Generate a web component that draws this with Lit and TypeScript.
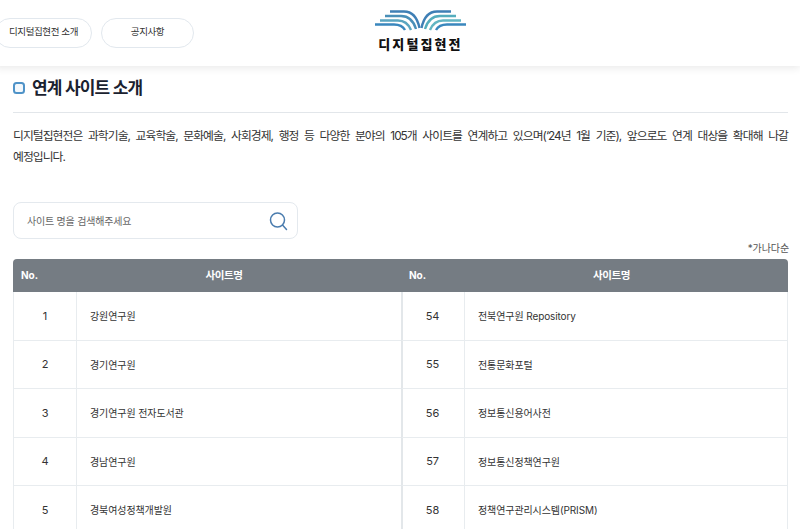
import { LitElement, html, css, svg } from "lit";
import { customElement } from "lit/decorators.js";

const rows: [string, string, string, string][] = [
  ["1", "강원연구원", "54", "전북연구원 Repository"],
  ["2", "경기연구원", "55", "전통문화포털"],
  ["3", "경기연구원 전자도서관", "56", "정보통신용어사전"],
  ["4", "경남연구원", "57", "정보통신정책연구원"],
  ["5", "경북여성정책개발원", "58", "정책연구관리시스템(PRISM)"],
];

@customElement("app-root")
export class AppRoot extends LitElement {
  static styles = css`
    :host {
      display: block;
      width: 800px;
      height: 529px;
      overflow: hidden;
      background: #fff;
      font-family: Inter, "Noto Sans CJK KR", "Noto Sans", sans-serif;
      color: #222;
    }
    header {
      height: 66px;
      position: relative;
      display: flex;
      align-items: flex-start;
      gap: 9px;
      padding: 18px 0 0;
      margin-left: -5px;
      box-sizing: border-box;
      box-shadow: 0 2px 8px rgba(0, 0, 0, 0.09);
    }
    .pill {
      width: 93px;
      height: 30px;
      box-sizing: border-box;
      border: 1px solid #e2e8ee;
      border-radius: 15px;
      display: flex;
      align-items: center;
      justify-content: center;
      font-size: 9.5px;
      letter-spacing: -0.4px;
      color: #333;
      padding-bottom: 4px;
    }
    .pill.first { width: 97px; }
    .logo {
      position: absolute;
      left: 379px;
      top: 10px;
      width: 93px;
      display: flex;
      flex-direction: column;
      align-items: center;
    }
    .logo svg { display: block; }
    .logo-text {
      font-size: 13px;
      font-weight: 900;
      letter-spacing: 2.1px;
      color: #111;
      line-height: 14px;
      margin-top: 6px;
      white-space: nowrap;
    }
    main { padding: 0 12px 0 13px; }
    .title {
      display: flex;
      align-items: center;
      gap: 7px;
      height: 47px;
      padding-bottom: 2px;
      box-sizing: border-box;
      border-bottom: 1px solid #e2e6ea;
      font-size: 17px;
      font-weight: 700;
      letter-spacing: -0.8px;
      color: #1a2230;
      line-height: 1;
    }
    .mark {
      width: 12px;
      height: 12px;
      box-sizing: border-box;
      border: 2.5px solid #4f93c8;
      border-radius: 3.5px;
      background: #f3f8fc;
    }
    .desc {
      margin: 13px 0 0;
      font-size: 11.8px;
      line-height: 21px;
      color: #333;
      letter-spacing: -0.95px;
      word-spacing: 2px;
    }
    .desc span { display: block; }
    .desc .full { text-align: justify; text-align-last: justify; }
    .search {
      margin-top: 34px;
      width: 285px;
      height: 37px;
      box-sizing: border-box;
      border: 1px solid #e4e9ee;
      border-radius: 8px;
      display: flex;
      align-items: center;
      justify-content: space-between;
      padding: 0 9px 0 13px;
      font-size: 10px;
      letter-spacing: -0.2px;
      color: #666;
    }
    .note {
      text-align: right;
      font-size: 10px;
      letter-spacing: -0.1px;
      line-height: 14px;
      margin: 2px -1px 0 0;
      color: #555;
      height: 18px;
    }
    .table {
      display: grid;
      grid-template-columns: 64px 324px 64px 1fr;
      font-size: 10px;
      letter-spacing: -0.1px;
      color: #333;
    }
    .th {
      height: 33px;
      background: #757c83;
      color: #fff;
      font-weight: 700;
      font-size: 10.5px;
      display: flex;
      align-items: center;
      justify-content: center;
      padding: 0 30px 2px 0;
      box-sizing: border-box;
      letter-spacing: -0.4px;
    }
    .th.no { justify-content: flex-start; padding: 0 0 2px 8px; letter-spacing: 0; font-size: 10px; }
    .th.first { border-top-left-radius: 4px; }
    .th.last { border-top-right-radius: 4px; }
    .td {
      height: 48.5px;
      box-sizing: border-box;
      border-bottom: 1px solid #e8ecef;
      display: flex;
      align-items: center;
    }
    .td.n {
      justify-content: center;
      border-right: 1px solid #e8ecef;
      font-size: 11px;
    }
    .td.s { padding-left: 13px; }
    .td.b1 { border-left: 1px solid #e8ecef; }
    .td.b2 { border-left: 2px solid #e3e7ea; padding-right: 2px; }
    .td.e { border-right: 1px solid #e8ecef; }
  `;

  private logo() {
    const paths: [string, string][] = [
      ["M16 1.5 H30 Q42 1.5 45.5 18", "#3f7fb5"],
      ["M11 6 H27 Q38 6 42 19", "#4a8fb8"],
      ["M6 10.5 H24 Q33 10.5 37 20", "#5aa5c0"],
      ["M1 14.5 H20 Q28 14.5 31 20", "#3a87bd"],
      ["M77 1.5 H63 Q51 1.5 47.5 18", "#3f7fb5"],
      ["M82 6 H66 Q55 6 51 19", "#55adbd"],
      ["M87 10.5 H69 Q60 10.5 56 20", "#62b5c2"],
      ["M92 14.5 H73 Q65 14.5 62 20", "#3a87bd"],
    ];
    return html`<svg width="93" height="21" viewBox="0 0 93 21" fill="none" stroke-width="2.4">
      ${paths.map(([d, c]) => svg`<path d=${d} stroke=${c}></path>`)}
    </svg>`;
  }

  render() {
    return html`
      <header>
        <div class="pill first">디지털집현전 소개</div>
        <div class="pill">공지사항</div>
        <div class="logo">${this.logo()}<div class="logo-text">디지털집현전</div></div>
      </header>
      <main>
        <div class="title"><span class="mark"></span>연계 사이트 소개</div>
        <p class="desc">
          <span class="full">디지털집현전은 과학기술, 교육학술, 문화예술, 사회경제, 행정 등 다양한 분야의 105개 사이트를 연계하고 있으며(‘24년 1월 기준), 앞으로도 연계 대상을 확대해 나갈</span>
          <span>예정입니다.</span>
        </p>
        <div class="search">
          <span>사이트 명을 검색해주세요</span>
          <svg width="20" height="20" viewBox="0 0 20 20" fill="none" stroke="#4a7cae" stroke-width="1.5">
            <circle cx="9.5" cy="9" r="7"></circle>
            <path d="M14.5 14 L18.5 18.5" stroke-linecap="round"></path>
          </svg>
        </div>
        <div class="note">*가나다순</div>
        <div class="table">
          <div class="th no first">No.</div>
          <div class="th">사이트명</div>
          <div class="th no">No.</div>
          <div class="th last">사이트명</div>
          ${rows.map(
            (r) => html`
              <div class="td n b1">${r[0]}</div>
              <div class="td s">${r[1]}</div>
              <div class="td n b2">${r[2]}</div>
              <div class="td s e">${r[3]}</div>
            `
          )}
        </div>
      </main>
    `;
  }
}
